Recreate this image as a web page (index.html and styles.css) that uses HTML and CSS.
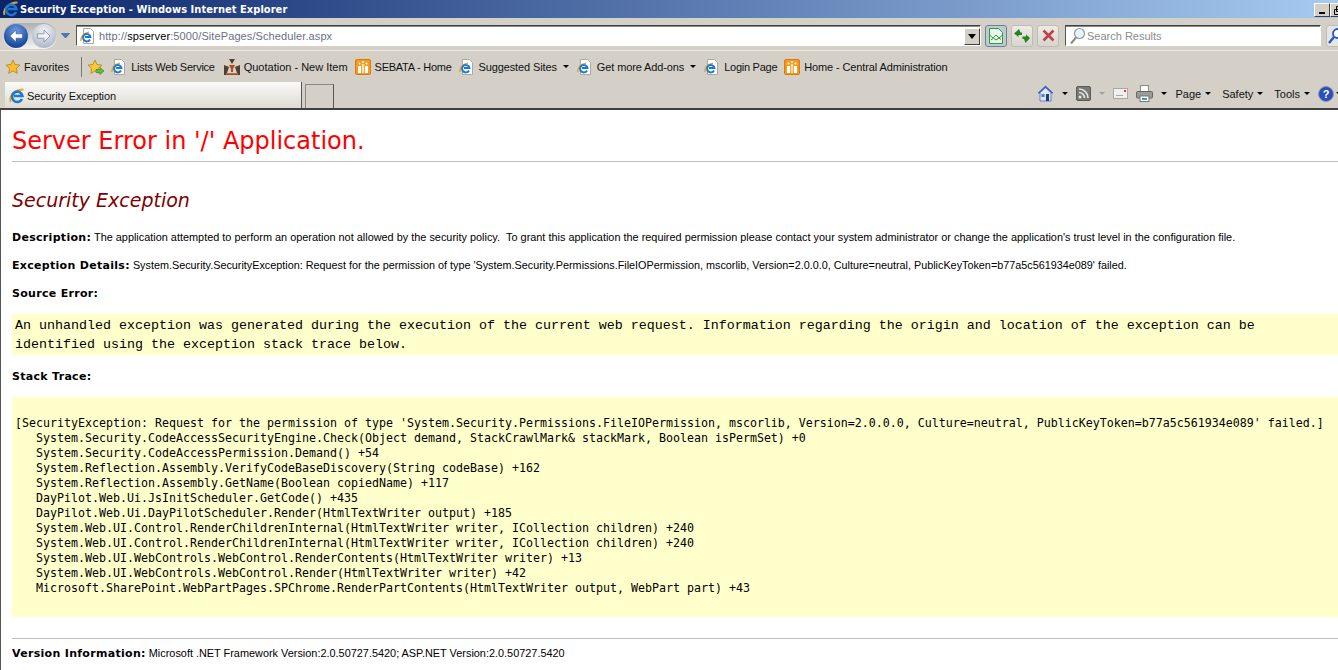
FILE: index.html

```html
<!DOCTYPE html>
<html lang="en">
<head>
  <meta charset="UTF-8" />
  <title>Security Exception - Windows Internet Explorer</title>
  <link rel="stylesheet" href="styles.css">
</head>
<body>
<svg class="defs" width="0" height="0">
  <defs>
    <symbol id="ie" viewBox="0 0 16 16">
      <path d="M1.500 14C-.5 8 6 1.500 14.500 1.500" fill="none" stroke="#e8a820" stroke-width="1.800"/>
      <path d="M13 11a5.200 5.200 0 1 1 .4-3H5" fill="none" stroke="#1c78d0" stroke-width="2.600"/>
    </symbol>
    <symbol id="page" viewBox="0 0 16 16">
      <path d="M3.500.5h7l3 3v12h-10z" fill="#fff" stroke="#a8a8a8"/>
      <path d="M.8 13C.5 8.500 4 4.500 9 4.200" fill="none" stroke="#e8a820" stroke-width="1.500"/>
      <path d="M10 11.500a3.700 3.700 0 1 1 .4-2.500H5" fill="none" stroke="#1c78d0" stroke-width="2"/>
    </symbol>
    <symbol id="star" viewBox="0 0 16 16">
      <path d="M8 1l2.100 4.500 4.900.6-3.600 3.400.9 4.900L8 11.900l-4.300 2.500.9-4.900L1 6.100l4.900-.6z" fill="#f8c030" stroke="#b88018" stroke-width=".8"/>
    </symbol>
    <symbol id="sp" viewBox="0 0 16 16">
      <rect x=".5" y=".5" width="15" height="15" rx="1.500" fill="#f79a20" stroke="#d87810"/>
      <rect x="3" y="7" width="3" height="7" fill="#fff"/>
      <rect x="10" y="7" width="3" height="7" fill="#fff"/>
      <rect x="6.800" y="5" width="2.400" height="9" fill="#fde0b0"/>
      <circle cx="4.500" cy="4.500" r="1" fill="#fff"/>
      <circle cx="11.500" cy="4.500" r="1" fill="#fff"/>
      <circle cx="8" cy="3" r="1" fill="#fff"/>
    </symbol>
  </defs>
</svg>

<div class="title-bar">
  <svg class="title-icon"><use href="#ie"/></svg>
  <span class="title-text">Security Exception - Windows Internet Explorer</span>
  <span class="win-btn">
    <svg width="10" height="12" viewBox="0 0 10 12"><rect x="2" y="8" width="6" height="2" fill="#000"/></svg>
  </span>
  <span class="win-btn win-btn-cut">
    <svg width="10" height="12" viewBox="0 0 10 12"><path d="M3.500 2.500h5v5h-5zM1.500 5.500h5v5h-5z" fill="none" stroke="#000"/></svg>
  </span>
</div>

<div class="address-row">
  <span class="nav-pill">
    <span class="nav-btn nav-back">
      <svg width="18" height="18" viewBox="0 0 18 18"><path d="M9 3L3 9l6 6v-3.800h6.500V6.800H9z" fill="#fff" stroke="#16407c" stroke-width=".5"/></svg>
    </span>
    <span class="nav-btn nav-fwd">
      <svg width="18" height="18" viewBox="0 0 18 18"><path d="M9 3l6 6-6 6v-3.800H2.500V6.800H9z" fill="#eef1f6" stroke="#7f8ba0" stroke-width=".8"/></svg>
    </span>
  </span>
  <svg class="nav-drop" width="9" height="6" viewBox="0 0 9 6"><path d="M.5.5h8L4.500 5z" fill="#3f7fc8" stroke="#1b4f8c" stroke-width=".6"/></svg>
  <div class="address-box">
    <svg class="icon-16"><use href="#page"/></svg>
    <span class="url">http://<b>spserver</b>:5000/SitePages/Scheduler.aspx</span>
    <span class="combo-btn"><svg width="8" height="5" viewBox="0 0 8 5"><path d="M0 0h8L4 5z" fill="#000"/></svg></span>
  </div>
  <span class="tool-btn tool-btn-on">
    <svg width="16" height="18" viewBox="0 0 16 18"><path d="M1.500 1.500h9l4 4v11h-13z" fill="#e8f6ea" stroke="#2f9a3c"/><path d="M1.500 8l3.500 3 3-3 3 3 3-2.500M3 13l2.500-2 2.500 2 3-2 2 1.500" fill="none" stroke="#2f9a3c"/></svg>
  </span>
  <span class="tool-btn">
    <svg width="18" height="16" viewBox="0 0 18 16"><path d="M6 1L1 5.500 5.500 9V7H9V4.500H7.500zM12.500 15l4.500-5-4-3.500V8.500H9.500V11h1.500z" fill="#24851f"/></svg>
  </span>
  <span class="tool-btn">
    <svg width="13" height="13" viewBox="0 0 13 13"><path d="M1.500 1.500l10 10M11.500 1.500l-10 10" stroke="#c23f46" stroke-width="2.600"/></svg>
  </span>
  <div class="search-box">
    <svg width="17" height="18" viewBox="0 0 17 18"><circle cx="10.500" cy="6.500" r="5" fill="#eef4fb" stroke="#8a9ab0" stroke-width="1.200"/><path d="M7 10.500l-5 6" stroke="#8a8a80" stroke-width="2"/></svg>
    <span class="search-text">Search Results</span>
  </div>
  <span class="search-go">
    <svg width="17" height="18" viewBox="0 0 17 18"><circle cx="10.500" cy="6.500" r="4.500" fill="#fff" stroke="#2458c8" stroke-width="1.800"/><path d="M7 10l-5 6" stroke="#2458c8" stroke-width="2.400"/></svg>
  </span>
</div>

<div class="links-row">
  <span class="fav-btn"><svg class="icon-16"><use href="#star"/></svg>Favorites</span>
  <span class="links-sep"></span>
  <span class="link-item link-add">
    <svg width="18" height="16" viewBox="0 0 18 16"><path d="M8 1l2 4.500 4.800.6-3.500 3.400.8 4.900L8 11.900l-4.200 2.500.8-4.900L1 6.100l4.900-.6z" fill="#f8c838" stroke="#b88018" stroke-width=".8"/><path d="M9 10.500h4V8.500l4 3.500-4 3.500v-2H9z" fill="#5ec040" stroke="#2f8a20" stroke-width=".6"/></svg>
  </span>
  <span class="link-item tight link-lists"><svg class="icon-16"><use href="#page"/></svg>Lists Web Service</span>
  <span class="link-item loose">
    <svg class="icon-16" viewBox="0 0 16 16"><rect width="16" height="16" fill="#4a4238"/><path d="M0 0h5L8 5l3-5h5v6l-5 2 2 6H3l2-6-5-2z" fill="#d8d0c0"/><path d="M5 6h6l-2 4v3H7v-3z" fill="#b04a28"/><rect x="2" y="14" width="12" height="1.500" fill="#d06040"/></svg>
    Quotation - New Item
  </span>
  <span class="link-item tight"><svg class="icon-16"><use href="#sp"/></svg>SEBATA - Home</span>
  <span class="link-item"><svg class="icon-16"><use href="#page"/></svg>Suggested Sites<i class="caret caret-link"></i></span>
  <span class="link-item"><svg class="icon-16"><use href="#page"/></svg>Get more Add-ons<i class="caret caret-link"></i></span>
  <span class="link-item tight"><svg class="icon-16"><use href="#page"/></svg>Login Page</span>
  <span class="link-item"><svg class="icon-16"><use href="#sp"/></svg>Home - Central Administration</span>
</div>

<div class="tabs-row">
  <div class="tab">
    <svg class="icon-16"><use href="#ie"/></svg>
    <span>Security Exception</span>
  </div>
  <div class="tab-new"></div>
  <div class="cmd-bar">
    <span class="cmd cmd-icon">
      <svg width="17" height="17" viewBox="0 0 17 17"><path d="M8.500 1L1 8h2v8h11V8h2z" fill="#dce8f4" stroke="#4a68b8" stroke-width=".8"/><path d="M8.500 1L1 8h2l5.500-5L14 8h2z" fill="#3a5cc0"/><rect x="9" y="9" width="3" height="7" fill="#1c3c90"/><rect x="4.500" y="9" width="3" height="3" fill="#507cc0"/></svg>
      <i class="caret"></i>
    </span>
    <span class="cmd cmd-icon">
      <svg width="15" height="15" viewBox="0 0 15 15"><rect x=".5" y=".5" width="14" height="14" rx="1.500" fill="#7a7a74" stroke="#5a5a56"/><circle cx="4" cy="11" r="1.500" fill="#e4e4e0"/><path d="M3 6.500a5.500 5.500 0 0 1 5.500 5.500M3 3a9 9 0 0 1 9 9" fill="none" stroke="#e4e4e0" stroke-width="1.600"/></svg>
      <i class="caret caret-dim"></i>
    </span>
    <span class="cmd cmd-icon">
      <svg width="15" height="11" viewBox="0 0 15 11"><rect x=".5" y=".5" width="14" height="10" fill="#f2f0ec" stroke="#a8a8a4"/><rect x="3" y="7" width="7" height="1" fill="#a8a8a4"/><rect x="11" y="2" width="2" height="2" fill="#d04040"/></svg>
    </span>
    <span class="cmd cmd-icon">
      <svg width="17" height="17" viewBox="0 0 17 17"><rect x="4.500" y=".5" width="8" height="6" fill="#fff" stroke="#888"/><rect x=".5" y="6.500" width="16" height="6.500" rx="1" fill="#9a9a98" stroke="#666"/><rect x="4" y="11" width="9" height="5.500" fill="#fff" stroke="#777"/><rect x="6" y="13" width="5" height="2" fill="#3c9ac8"/></svg>
      <i class="caret"></i>
    </span>
    <span class="cmd">Page<i class="caret"></i></span>
    <span class="cmd">Safety<i class="caret"></i></span>
    <span class="cmd">Tools<i class="caret"></i></span>
    <span class="help">?</span>
    <i class="caret caret-help"></i>
  </div>
</div>

<main class="page">
  <h1>Server Error in '/' Application.</h1>
  <hr class="rule">
  <h2>Security Exception</h2>
  <p class="desc"><b>Description:</b> The application attempted to perform an operation not allowed by the security policy. &nbsp;To grant this application the required permission please contact your system administrator or change the application's trust level in the configuration file.</p>
  <p class="desc desc-detail"><b>Exception Details:</b> System.Security.SecurityException: Request for the permission of type 'System.Security.Permissions.FileIOPermission, mscorlib, Version=2.0.0.0, Culture=neutral, PublicKeyToken=b77a5c561934e089' failed.</p>
  <p class="desc"><b>Source Error:</b></p>
  <div class="code source"><code>An unhandled exception was generated during the execution of the current web request. Information regarding the origin and location of the exception can be
identified using the exception stack trace below.</code></div>
  <p class="desc stack-title"><b>Stack Trace:</b></p>
  <div class="code stack"><pre>[SecurityException: Request for the permission of type 'System.Security.Permissions.FileIOPermission, mscorlib, Version=2.0.0.0, Culture=neutral, PublicKeyToken=b77a5c561934e089' failed.]
   System.Security.CodeAccessSecurityEngine.Check(Object demand, StackCrawlMark&amp; stackMark, Boolean isPermSet) +0
   System.Security.CodeAccessPermission.Demand() +54
   System.Reflection.Assembly.VerifyCodeBaseDiscovery(String codeBase) +162
   System.Reflection.Assembly.GetName(Boolean copiedName) +117
   DayPilot.Web.Ui.JsInitScheduler.GetCode() +435
   DayPilot.Web.Ui.DayPilotScheduler.Render(HtmlTextWriter output) +185
   System.Web.UI.Control.RenderChildrenInternal(HtmlTextWriter writer, ICollection children) +240
   System.Web.UI.Control.RenderChildrenInternal(HtmlTextWriter writer, ICollection children) +240
   System.Web.UI.WebControls.WebControl.RenderContents(HtmlTextWriter writer) +13
   System.Web.UI.WebControls.WebControl.Render(HtmlTextWriter writer) +42
   Microsoft.SharePoint.WebPartPages.SPChrome.RenderPartContents(HtmlTextWriter output, WebPart part) +43</pre></div>
  <hr class="rule rule-bottom">
  <p class="desc version"><b>Version Information:</b> Microsoft .NET Framework Version:2.0.50727.5420; ASP.NET Version:2.0.50727.5420</p>
</main>
</body>
</html>
```

FILE: styles.css

```css
* { box-sizing: border-box; }
html, body { height: 100%; }
body { margin: 0; background: #d4d0c8; font-family: "Liberation Sans", Arial, sans-serif; font-size: 12px; color: #000; overflow: hidden; display: flex; flex-direction: column; }
.defs { display: none; }
.icon-16 { width: 16px; height: 16px; flex: none; }

.title-bar { height: 18px; flex: none; display: flex; align-items: center; padding-left: 3px; background: linear-gradient(to right, #0a246a, #a6caf0); color: #fff; }
.title-icon { width: 16px; height: 16px; flex: none; }
.title-text { margin-left: 1px; flex: 1; font: bold 11px "DejaVu Sans", sans-serif; font-stretch: condensed; letter-spacing: .05px; }
.win-btn { width: 16px; height: 14px; margin-top: 1px; flex: none; background: #d4d0c8; border: 1px solid; border-color: #fff #404040 #404040 #fff; display: flex; align-items: center; justify-content: center; }
.win-btn-cut { margin-right: -8px; }

.address-row { height: 32px; flex: none; display: flex; align-items: center; padding-top: 3px; }
.nav-pill { display: flex; flex: none; margin-left: 3px; padding: 1px; border-radius: 14px; background: linear-gradient(#b0b0b0, #f4f4f4); }
.nav-btn { width: 24px; height: 24px; border-radius: 50%; display: flex; align-items: center; justify-content: center; }
.nav-back { background: radial-gradient(circle at 50% 30%, #6ea0e4, #1c4a9c 70%); }
.nav-fwd { margin-left: 4px; background: radial-gradient(circle at 50% 30%, #f0f2f6, #b4bccc 75%); }
.nav-drop { margin-left: 4px; margin-right: 6px; flex: none; }
.address-box { width: 905px; height: 21px; flex: none; display: flex; align-items: center; background: #fff; border: 1px solid; border-color: #404040 #fff #fff #555; box-shadow: inset 0 1px #888; padding-left: 3px; }
.url { flex: 1; margin-left: 3px; font-size: 11px; color: #6d6d8a; letter-spacing: .1px; }
.url b { font-weight: normal; color: #000; }
.combo-btn { width: 16px; height: 17px; margin-top: 1px; background: #d4d0c8; border: 1px solid; border-color: #fff #404040 #404040 #fff; display: flex; align-items: center; justify-content: center; }
.tool-btn { width: 22px; height: 22px; margin-left: 4px; border: 1px solid #bdbdb8; border-radius: 3px; background: linear-gradient(#ecebe6, #d8d5ce); display: flex; align-items: center; justify-content: center; flex: none; }
.tool-btn-on { background: #bccbd4; border-color: #6c8294; }
.search-box { width: 256px; height: 21px; margin-left: 6px; flex: none; display: flex; align-items: center; gap: 1px; background: #fff; border: 1px solid; border-color: #404040 #fff #fff #555; box-shadow: inset 0 1px #888; padding-left: 3px; }
.search-text { font-size: 11px; color: #8b8b8b; }
.search-go { width: 24px; height: 22px; margin-left: 5px; flex: none; border: 1px solid #bdbdb8; border-radius: 3px; background: #e8e6e0; display: flex; align-items: center; }

.links-row { height: 32px; flex: none; display: flex; align-items: center; padding-left: 5px; border-top: 1px solid #ece9e2; font-size: 11px; letter-spacing: -.12px; color: #111; }
.fav-btn { display: flex; align-items: center; gap: 3px; letter-spacing: 0; }
.links-sep { width: 1px; height: 20px; margin: 0 5px 0 12px; background: #777; }
.link-item { display: flex; align-items: center; gap: 4px; margin-right: 7px; white-space: nowrap; }
.link-item.tight { letter-spacing: -.26px; }
.link-item.loose { letter-spacing: 0; }
.link-lists { margin-right: 9px; }
.link-add { margin-right: 6px; gap: 0; }
.caret { display: inline-block; width: 0; height: 0; margin-left: 4px; border: 3px solid transparent; border-top: 3px solid #000; border-bottom: 0; flex: none; }
.caret-link { margin-left: 2px; margin-right: 1px; }
.caret-dim { border-top-color: #a0a0a0; }
.caret-help { margin-left: 2px; }

.tabs-row { height: 28px; flex: none; display: flex; align-items: flex-end; padding-left: 5px; border-bottom: 2px solid #404040; font-size: 11px; letter-spacing: -.12px; }
.tab { width: 297px; height: 26px; flex: none; display: flex; align-items: center; gap: 2px; padding: 2px 0 0 4px; background: linear-gradient(#fafaf8, #dedbd4); border-right: 1px solid #555; color: #111; }
.tab-new { width: 29px; height: 24px; flex: none; margin-left: 3px; border: 1px solid #8a8a84; border-bottom: 0; border-right-color: #555; background: #d4d0c8; }
.cmd-bar { margin-left: auto; height: 25px; display: flex; align-items: center; margin-right: -4px; padding-bottom: 4px; letter-spacing: 0; }
.cmd { display: flex; align-items: center; margin-right: 11px; color: #111; white-space: nowrap; }
.cmd-icon { margin-right: 8px; }
.cmd-icon .caret { margin-left: 8px; }
.help { width: 16px; height: 16px; margin-left: -3px; border-radius: 50%; background: #2a50b8; border: 1px solid #8a98b8; color: #fff; font: bold 11px "Liberation Sans", sans-serif; text-align: center; line-height: 14px; flex: none; }

.page { flex: 1; background: #fff; border-left: 1px solid #555; padding-left: 11px; font-family: "DejaVu Sans", Verdana, sans-serif; overflow: hidden; }
h1 { margin: 15px 0 0; font-size: 24px; font-weight: normal; line-height: 32px; color: #f00; }
h2 { margin: 26px 0 18px; font-size: 19px; font-style: italic; font-weight: normal; line-height: 24px; color: #800000; }
.rule { margin: 4px 0 0; border: 0; border-top: 1px solid #c0c0c0; }
.desc { margin: 13px 0 0; font: 10.9px/14px "Liberation Sans", Arial, sans-serif; white-space: nowrap; }
.desc b { font: bold 11px/14px "DejaVu Sans", Verdana, sans-serif; letter-spacing: .3px; }
.desc-detail { font-size: 10.82px; }
.code { background: #ffffcc; margin-top: 13px; white-space: pre; }
.source { height: 41px; padding: 2px 3px; font: 13.33px/19px "Liberation Mono", "Courier New", monospace; }
.source code { font: inherit; }
.stack-title { margin-top: 14px; }
.stack { height: 220px; padding: 19px 3px; }
.stack pre { margin: 0; font: 11.63px/15px "DejaVu Sans Mono", monospace; }
.rule-bottom { margin-top: 21px; }
.version { margin-top: 7px; }
```
